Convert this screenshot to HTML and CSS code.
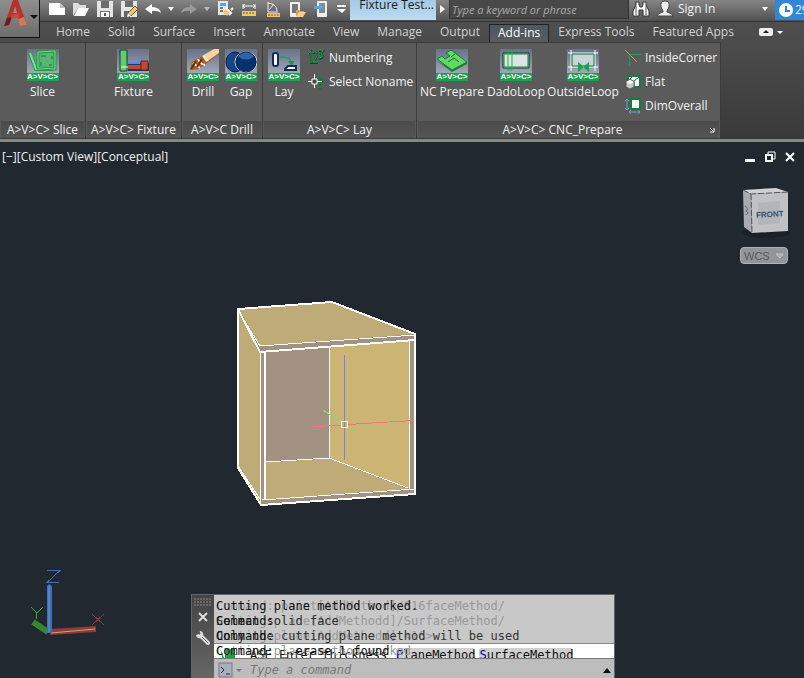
FILE: index.html
```html
<!DOCTYPE html>
<html lang="en">

<head>
    <meta charset="UTF-8">
    <meta name="viewport" content="width=device-width, initial-scale=1.0">
    <title>Fixture Test</title>
    <link rel="stylesheet" href="styles.css">
</head>

<body>
    <header class="top">
        <button class="app-button" aria-label="Application menu">
            <svg width="39" height="37" viewBox="0 0 39 37">
                <path d="M4 26L13 0H18L27 25L20 26L18 18H11L9 25Z" fill="#b8322c" />
                <path d="M13 13L15 6L17 13Z" fill="#8e8e8e" />
                <path d="M4 26L7 18L12 17L9 25Z" fill="#6d1d1a" />
                <path d="M18 19L24 17L27 25L20 26Z" fill="#cf7a5c" />
                <path d="M11 15L19 13V18H11Z" fill="#d1453a" />
                <path d="M30 15H38L34 19Z" fill="#111" />
            </svg>
        </button>

        <div class="title-bar">
            <div class="quick-access">
                <button aria-label="New"><svg width="18" height="18"><path d="M1 3H12L17 8V15H1Z" fill="#fff" /><path d="M12 3V8H17Z" fill="#bbb" /></svg></button>
                <button aria-label="Open"><svg width="18" height="18"><path d="M1 16V3H6L8 5H14V8H6Z" fill="#ddd" /><path d="M2 16L6 8H17L13 16Z" fill="#fff" /></svg></button>
                <button aria-label="Save"><svg width="18" height="18"><path d="M1 1H17V17H1Z" fill="#e4e4e4" /><path d="M5 1H13V8H5Z" fill="#6c6c6c" /><path d="M4 11H14V17H4Z" fill="#777" /><path d="M5 12H13V17H5Z" fill="#fff" /><path d="M8 13H10V16H8Z" fill="#555" /></svg></button>
                <button aria-label="Save as"><svg width="18" height="18"><path d="M1 1H17V17H1Z" fill="#e4e4e4" /><path d="M5 1H13V7H5Z" fill="#6c6c6c" /><path d="M4 11H10V17H4Z" fill="#666" /><path d="M15 6L18 9L11 16L8 13Z" fill="#f2c477" stroke="#7a5a27" /><path d="M8 13L11 16L7 17Z" fill="#fff" /></svg></button>
                <button aria-label="Undo"><svg width="18" height="18"><path d="M1 9L8 4V7Q16 7 17 13Q13 10 8 11V14Z" fill="#fff" /></svg></button>
                <button class="drop" aria-label="Undo list"><svg width="6" height="4"><path d="M0 0H6L3 4Z" fill="#fff" /></svg></button>
                <button aria-label="Redo"><svg width="18" height="18"><path d="M17 9L10 4V7Q2 7 1 13Q5 10 10 11V14Z" fill="#999" /></svg></button>
                <button class="drop" aria-label="Redo list"><svg width="6" height="4"><path d="M0 0H6L3 4Z" fill="#bbb" /></svg></button>
                <button aria-label="Match properties"><svg width="18" height="18"><path d="M2 1H12V15H2Z" fill="#e6e6e6" /><path d="M4 3H10V6H4Z" fill="#51a8e4" /><path d="M4 8H7M4 11H7" stroke="#777" stroke-width="2" /><path d="M7 12L10 9L14 13L11 16Z" fill="#f4c46c" /><path d="M10 8L15 13L13 15M15 10L17 8" stroke="#fff" stroke-width="2" fill="none" /></svg></button>
                <button aria-label="Measure"><svg width="18" height="18"><path d="M3 4V9M15 4V9M3 6H15M5 4L3 6L5 8M13 4L15 6L13 8" stroke="#fff" fill="none" /><path d="M2 11H16V16H2Z" fill="#f7c566" /><path d="M4 12V14M7 12V14M10 12V14M13 12V14" stroke="#6c552a" /></svg></button>
                <button aria-label="Angle"><svg width="18" height="18"><path d="M4 2V12H14M4 3Q13 4 13 11M5 10L10 4" stroke="#eee" fill="none" /><path d="M3 13H16V17H3Z" fill="#f7c566" /><path d="M5 14V16M8 14V16M11 14V16M14 14V16" stroke="#6c552a" /></svg></button>
                <button aria-label="Open from mobile"><svg width="18" height="18"><rect x="2" y="2" width="10" height="15" rx="1" fill="#eee" /><path d="M4 4H10V13H4Z" fill="#777" /><path d="M8 16V10H11L12 11H16V12Z" fill="#d99d4e" /><path d="M8 17L11 12H18L15 17Z" fill="#f8cf8b" /></svg></button>
                <button aria-label="Save to mobile"><svg width="18" height="18"><rect x="5" y="1" width="10" height="16" rx="1" fill="#eee" /><path d="M7 3H13V13H7Z" fill="#888" /><path d="M2 6H7V3L12 7L7 11V9H2Z" fill="#49a8ed" /></svg></button>
                <button class="drop more" aria-label="Customize"><svg width="9" height="8"><path d="M0 0H9V2H0ZM0 4H9L5 8Z" fill="#fff" /></svg></button>
            </div>
            <span class="doc-title">Fixture Test...</span>
            <button class="drop next" aria-label="Show search"><svg width="5" height="8"><path d="M0 0L5 4L0 8Z" fill="#fff" /></svg></button>
            <input class="search" type="text" placeholder="Type a keyword or phrase" aria-label="Search">
            <button class="find" aria-label="Find"><svg width="18" height="18"><path d="M4 2H7V5L8 7H10L11 5V2H14V5L17 11V16H11V10H7V16H1V11L4 5Z" fill="#fff" stroke="#333" /><path d="M4 6V15M14 6V15" stroke="#555" /></svg></button>
            <button class="sign-in">
                <svg width="18" height="18"><path d="M9 1Q14 1 13 7L11 11V12Q16 13 17 16H1Q2 13 7 12V11L5 7Q4 1 9 1Z" fill="#eee" stroke="#444" /></svg>
                <span>Sign In</span>
                <svg width="6" height="4"><path d="M0 0H6L3 4Z" fill="#fff" /></svg>
            </button>
            <div class="trial">
                <svg width="14" height="14"><circle cx="7" cy="7" r="7" fill="#fff" /><path d="M7 3V8H11" stroke="#3187d5" stroke-width="2" fill="none" /></svg>
                <span>29</span>
            </div>
        </div>

        <nav class="tabs">
            <a href="#">Home</a>
            <a href="#">Solid</a>
            <a href="#">Surface</a>
            <a href="#">Insert</a>
            <a href="#">Annotate</a>
            <a href="#">View</a>
            <a href="#">Manage</a>
            <a href="#">Output</a>
            <a href="#" class="active">Add-ins</a>
            <a href="#">Express Tools</a>
            <a href="#">Featured Apps</a>
            <button class="minimize" aria-label="Minimize ribbon"><svg width="24" height="8"><rect width="14" height="8" rx="2" fill="#eee" /><path d="M4 5H10L7 2Z" fill="#222" /><path d="M18 3H24L21 6Z" fill="#fff" /></svg></button>
        </nav>
    </header>

    <main class="ribbon">
        <section class="panel">
            <div class="tools">
                <button class="tool">
                    <span class="icon"><svg width="32" height="24"><path d="M3 4L9 20H26" fill="none" stroke="#2e9b4a" stroke-width="4" /><path d="M3 4L9 20H26" fill="none" stroke="#7fe28e" stroke-width="2" /><path d="M11 3L28 2V20L11 19Z" fill="#54b873" stroke="#2a8f44" stroke-width="3" /><path d="M11 3L28 2V20L11 19Z" fill="none" stroke="#6bea7d" /><path d="M14 7H19M25 7V10M25 16H22M14 17V13" stroke="#286b3e" fill="none" /></svg><b>A&gt;V&gt;C&gt;</b></span>
                    Slice
                </button>
            </div>
            <h2>A&gt;V&gt;C&gt; Slice</h2>
        </section>

        <section class="panel">
            <div class="tools">
                <button class="tool">
                    <span class="icon"><svg width="32" height="24"><path d="M11 14H32V22H11Z" fill="#1d376b" /><path d="M11 14H23" stroke="#4c90df" stroke-width="2" /><path d="M11 16H24V20H11Z" fill="#c14a2c" /><path d="M24 12H31V21H24Z" fill="#bd4b2e" stroke="#65231b" /><path d="M3 1H10V22H3Z" fill="#5fce6b" stroke="#123f27" /><path d="M4 18H11" stroke="#dfffff" /></svg><b>A&gt;V&gt;C&gt;</b></span>
                    Fixture
                </button>
            </div>
            <h2>A&gt;V&gt;C&gt; Fixture</h2>
        </section>

        <section class="panel">
            <div class="tools pair">
                <button class="tool">
                    <span class="icon"><svg width="32" height="24"><path d="M3 21L5 13L27 0H32V5L12 20Z" fill="#a95c2b" /><path d="M15 7L27 0H32V4L19 13Z" fill="#f4d3a0" /><path d="M6 14L13 19M11 10Q13 15 18 16M17 7L21 12" stroke="#fff0d1" stroke-width="2" fill="none" /><path d="M4 20L9 12M10 18L15 10" stroke="#6a3011" stroke-width="2" /></svg><b>A&gt;V&gt;C&gt;</b></span>
                    Drill
                </button>
                <button class="tool">
                    <span class="icon"><svg width="32" height="24"><ellipse cx="10" cy="13" rx="9" ry="10" fill="#15458b" stroke="#0c1d3d" /><ellipse cx="21" cy="13" rx="11" ry="10" fill="#06336f" stroke="#dce7f5" /><path d="M12 7Q20 0 30 7Q21 14 12 7" fill="#2b65aa" /><ellipse cx="21" cy="13" rx="10" ry="10" fill="none" stroke="#0c1d3d" /></svg><b>A&gt;V&gt;C&gt;</b></span>
                    Gap
                </button>
            </div>
            <h2>A&gt;V&gt;C Drill</h2>
        </section>

        <section class="panel">
            <div class="tools lay">
                <button class="tool">
                    <span class="icon"><svg width="32" height="24"><rect x="5" y="4" width="5" height="13" rx="2" fill="#f6faff" stroke="#102c5d" stroke-width="2" /><path d="M12 8H16L18 9H21L24 14" stroke="#12984c" fill="none" /><path d="M20 12H26L24 17Z" fill="#12984c" /><path d="M17 20L20 17H28V21H17Z" fill="#f6faff" stroke="#102c5d" stroke-width="2" /></svg><b>A&gt;V&gt;C&gt;</b></span>
                    Lay
                </button>
                <div class="list">
                    <button class="small"><svg width="18" height="18"><path d="M2 5L4 3V15M6 5Q8 2 10 4Q11 7 6 14H11M12 2H16L14 5Q17 6 15 9L12 10" fill="none" stroke="#0c4a2a" stroke-width="2" /><path d="M1 5L4 2V14M6 4Q8 1 10 4Q11 7 6 13H11M12 1H16L14 5Q17 6 15 8L12 9" fill="none" stroke="#16a852" /></svg>Numbering</button>
                    <button class="small"><svg width="18" height="18"><path d="M11 7Q16 5 15 9Q13 11 13 13M13 15V17" stroke="#127a3d" stroke-width="3" fill="none" /><path d="M7.500 1V15M1 8.500H15" stroke="#fff" /><path d="M5 6H10V11H5Z" fill="#444" stroke="#fff" /></svg>Select Noname</button>
                </div>
            </div>
            <h2>A&gt;V&gt;C&gt; Lay</h2>
        </section>

        <section class="panel">
            <div class="tools prepare">
                <button class="tool">
                    <span class="icon"><svg width="32" height="24"><path d="M1 12L16 23L31 15V12L16 20Z" fill="#2a7a3a" /><path d="M1 10L6 7L9 10L14 7L10 4L15 1L31 13L16 21Z" fill="#5fda63" stroke="#167c35" /><path d="M12 13L18 9L23 13M15 8L19 5" stroke="#16733a" fill="none" /></svg><b>A&gt;V&gt;C&gt;</b></span>
                    NC Prepare
                </button>
                <button class="tool">
                    <span class="icon"><svg width="32" height="24"><path d="M3 4H29V19H3Z" fill="#dfe3e4" stroke="#152e30" /><path d="M4 5H28V18H4Z" fill="none" stroke="#0b883a" /><path d="M8 2H12V21H8Z" fill="none" stroke="#12bd40" /></svg><b>A&gt;V&gt;C&gt;</b></span>
                    DadoLoop
                </button>
                <button class="tool">
                    <span class="icon"><svg width="32" height="24"><path d="M4 4H28V18H4Z" fill="#cbd5d7" /><path d="M4 1V22M28 1V22M1 4H31M1 18H31" stroke="#fff" /><path d="M5 5H27V17H5Z" fill="none" stroke="#08753a" /><path d="M11 13L17 18L11 23ZM22 13L16 18L22 23Z" fill="#14a84d" /></svg><b>A&gt;V&gt;C&gt;</b></span>
                    OutsideLoop
                </button>
                <div class="list">
                    <button class="small"><svg width="16" height="18"><path d="M0 1L12 13" stroke="#c4a254" /><path d="M16 5.500H6L4.500 7V17" stroke="#1ba250" fill="none" /></svg>InsideCorner</button>
                    <button class="small"><svg width="16" height="18"><path d="M3 3H15V14H3Z" fill="#fff" stroke="#0b833e" stroke-width="2" /><path d="M4 7L8 3M9 8L14 4M9 8V13M4 8H9" stroke="#0b833e" /><path d="M1 9L5 6L9 9V14L5 16L1 14Z" fill="#ccc" stroke="#555" /><path d="M1 9L5 11L9 9L5 7Z" fill="#fff" /></svg>Flat</button>
                    <button class="small"><svg width="16" height="18"><path d="M6 2H15V12H6Z" fill="#fff" stroke="#0b833e" stroke-width="2" /><path d="M2 2V13M0 4L2 2L4 4M0 11L2 13L4 11M4 15H15M6 13L4 15L6 17M13 13L15 15L13 17" stroke="#68a0d6" fill="none" /></svg>DimOverall</button>
                </div>
            </div>
            <h2 class="with-launcher">A&gt;V&gt;C&gt; CNC_Prepare <svg class="launcher" width="6" height="6"><path d="M1 1L5 5M5 1V5H1" stroke="#fff" fill="none" /></svg></h2>
        </section>
    </main>

    <div class="viewport">
        <div class="view-bar">
            <div class="view-label">[−][Custom View][Conceptual]</div>
            <div class="window-buttons">
                <button aria-label="Minimize"><svg width="12" height="12"><path d="M1 8H11V11H1Z" fill="#fff" /></svg></button>
                <button aria-label="Restore"><svg width="12" height="12"><path d="M4 3V1H11V8H9" stroke="#fff" fill="none" /><path d="M2 4H8V10H2Z" stroke="#fff" stroke-width="2" fill="none" /></svg></button>
                <button aria-label="Close"><svg width="12" height="12"><path d="M2 2L10 10M10 2L2 10" stroke="#fff" stroke-width="2" /></svg></button>
            </div>
        </div>

        <!-- Cabinet model with the crosshair -->
        <svg class="model" width="190" height="214" viewBox="230 298 190 214">
            <path d="M238 309L332 302L415 334V494L261 506L238 468Z" fill="#a39282" />
            <path d="M238 309L332 302L415 334L260 346Z" fill="#bfab78" />
            <path d="M238 311L260 350V505L238 467Z" fill="#bfab78" />
            <path d="M329 346L410 341V489L329 458Z" fill="#ccb574" />
            <path d="M265 462L329 458L408 489L265 500Z" fill="#bfab78" />
            <g fill="none" stroke="#fff" shape-rendering="crispEdges">
                <path d="M265 462L329 458L408 488M329.5 346V458M260 346L415 335M262 500L415 489" />
                <path d="M239 312L260 346M238 466L260 499" />
                <path d="M238 309L332 302L415 334V494L261 505L238 468ZM238 309L260 352L415 340M265 352V500" stroke-width="2" />
                <path d="M260.5 351V505M409.5 341V489" />
            </g>
            <g fill="none" shape-rendering="crispEdges">
                <path d="M344.5 355V460" stroke="#7b7bf2" />
                <path d="M311 426.5L341 425.500M348 424.500L413 420.500" stroke="#f27878" />
                <path d="M323 410L341 422M348 427L356 432" stroke="#78e078" />
                <path d="M341.500 421.500H347.500V427.500H341.500Z" stroke="#fffbd0" />
            </g>
        </svg>

        <!-- View cube -->
        <svg class="cube" width="60" height="56" viewBox="736 184 60 56">
            <ellipse cx="766" cy="233" rx="24" ry="5" fill="#1c2127" />
            <path d="M743 190L776 188L788 192L751 194Z" fill="#d0d1d3" />
            <path d="M743 190L751 194L752 233L744 227Z" fill="#a9abae" />
            <path d="M751 194L788 192V231L752 233Z" fill="#bfc1c4" />
            <path d="M743 190L751 194L788 192M751 194L752 233" fill="none" stroke="#556" stroke-dasharray="6 2" />
            <path d="M758 203L780 201V223L758 225Z" fill="#b2b6ba" />
            <path d="M745 206Q749 208 746 211Q750 213 746 215" stroke="#50647a" fill="none" />
            <text x="756" y="217" transform="rotate(-3 770 214)">FRONT</text>
        </svg>
        <div class="wcs">
            <select aria-label="Coordinate system">
                <option>WCS</option>
            </select>
            <svg width="9" height="6"><path d="M1 1H8L5 5Z" fill="#a6a8ab" stroke="#c5c6c8" /></svg>
        </div>

        <!-- UCS axes -->
        <svg class="axes" width="84" height="74" viewBox="24 566 84 74">
            <path d="M33 622L48 632" stroke="#34872f" stroke-width="6" />
            <path d="M50 632L96 629" stroke="#8c3c3a" stroke-width="6" />
            <path d="M51 633L95 629" stroke="#d1a071" />
            <path d="M47 586L49 584L52 586V633H47Z" fill="#416fb5" />
            <path d="M49 586V632" stroke="#6a96d4" />
            <g fill="none" shape-rendering="crispEdges">
                <path d="M47 570.500H60L47 582.500H59" stroke="#416fb5" />
                <path d="M31 607L37 613L43 607M36.500 613V619" stroke="#22b422" />
                <path d="M92 614L104 625M104 614L92 625" stroke="#853f3f" />
            </g>
        </svg>

        <div class="command">
            <div class="handle">
                <svg width="18" height="8"><path d="M0 1H18M0 4H18M0 7H18" stroke="#888" stroke-dasharray="2 1" /></svg>
                <button aria-label="Close command line"><svg width="12" height="12"><path d="M2 2L10 10M10 2L2 10" stroke="#ddd" stroke-width="2" /></svg></button>
                <button aria-label="Customize command line"><svg width="16" height="16"><path d="M6 6L13 13" stroke="#ddd" stroke-width="4" stroke-linecap="round" /><path d="M6 6L13 13" stroke="#666" stroke-width="1" /><path d="M5 1L4 4L1 5Q2 9 6 8Q9 6 8 3Q7 1 5 1Z" fill="#ddd" /><path d="M2 1L5 4" stroke="#555" stroke-width="2" /></svg></button>
            </div>
            <div class="console">
                <div class="history">
                    <p><span class="ghost">Command: point[AddMethod]/S16faceMethod/</span><span>Cutting plane method worked.</span></p>
                    <p><span class="ghost">Cutting:plane[AddMethodd]/SurfaceMethod/</span><span class="faded">Select solid face</span><span>Command:</span></p>
                    <p><span class="ghost">Cutting:plane[AddMethodd] &lt;16&gt;</span><span class="faded">Only the cutting plane method will be used</span><span>Command:</span></p>
                </div>
                <div class="prompt">
                    <div class="options">
                        <svg width="16" height="12"><path d="M1 0L4 12H16V1H6V12" fill="#0ca944" /></svg>
                        <span>ASE Enter thickness [</span>
                        <button><em>P</em>laneMethod</button>
                        <button><em>S</em>urfaceMethod</button>
                    </div>
                    <p><span class="ghost">Cutting plane method worked</span><span>Command: _.erase 1 found</span></p>
                </div>
                <div class="entry">
                    <svg width="24" height="16"><rect x="1" y="1" width="13" height="14" fill="#a9b0bb" stroke="#737b88" /><path d="M3 5L6 8L3 11M8 12H12" stroke="#222c3b" fill="none" /><path d="M18 7H24L21 10Z" fill="#777" /></svg>
                    <input type="text" placeholder="Type a command" aria-label="Command">
                    <svg width="8" height="5"><path d="M0 5L4 0L8 5Z" fill="#111" /></svg>
                </div>
            </div>
        </div>
    </div>
</body>

</html>
```
FILE: styles.css
```css
* {
    margin: 0;
    padding: 0;
    box-sizing: border-box;
}

body {
    display: flex;
    flex-direction: column;
    height: 100vh;
    overflow: hidden;
    background-color: #212830;
    color: #f2f2f2;
    font-family: "Open Sans", "Noto Sans", sans-serif;
    font-size: 12px;
    line-height: 16px;
}

button, input, select {
    border: none;
    background: none;
    color: inherit;
    font: inherit;
}

svg {
    display: block;
    flex: none;
}

a {
    color: inherit;
    text-decoration: none;
}

/* Title bar and tabs */
.top {
    display: grid;
    grid-template-columns: 45px 1fr;
    grid-template-rows: 22px 20px;
    background: linear-gradient(#535353, #4b4b4b);
}

.app-button {
    grid-row: 1 / 3;
    width: 40px;
    height: 38px;
    border-right: 1px solid #111;
    border-bottom: 1px solid #111;
    background: linear-gradient(#8e8e8e, #6d6d6d);
    z-index: 1;
}

.title-bar {
    display: flex;
    min-width: 0;
    height: 22px;
    margin-left: -5px;
    padding-left: 5px;
    border-bottom: 1px solid #333;
    background: linear-gradient(#858585, #515151);
}

.quick-access {
    display: flex;
}

.title-bar button {
    display: flex;
    align-items: center;
    justify-content: center;
    width: 24px;
    height: 18px;
}

.title-bar .drop {
    width: 12px;
}

.title-bar .more {
    width: 17px;
}

.title-bar .next {
    width: 13px;
}

.doc-title {
    width: 86px;
    height: 20px;
    padding-right: 2px;
    background: linear-gradient(#a5c8e4, #bcdcf2);
    color: #1b1b1b;
    line-height: 10px;
    text-align: right;
    white-space: nowrap;
}

.search {
    width: 180px;
    height: 19px;
    padding-left: 2px;
    border: 1px solid #333;
    border-top: none;
    background-color: #484848;
    font-size: 11px;
    font-style: italic;
}

.search::placeholder {
    color: #a8a8a8;
}

.title-bar .sign-in {
    flex: 1;
    justify-content: flex-start;
    gap: 4px;
    padding: 0 7px 0 3px;
}

.sign-in span {
    flex: 1;
    text-align: left;
}

.trial {
    display: flex;
    align-items: center;
    gap: 2px;
    width: 29px;
    height: 20px;
    padding-left: 4px;
    overflow: hidden;
    background-color: #3187d5;
}

.tabs {
    display: flex;
    align-items: stretch;
    min-width: 0;
    padding-left: 2px;
    color: #d2d2d2;
    white-space: nowrap;
}

.tabs a {
    padding: 2px 9px 0;
}

.tabs .active {
    border: 1px solid #222;
    border-bottom: none;
    margin-top: 2px;
    padding: 0 8px;
    background: linear-gradient(#4d5763, #5b5b5b);
    color: #fff;
}

.minimize {
    margin-left: 16px;
}

/* Ribbon */
.ribbon {
    display: grid;
    grid-template-columns: 86px 96px 81px 154px 304px;
    height: 100px;
    padding-bottom: 1px;
    border-bottom: 3px solid #858885;
    background: linear-gradient(#4c4c4c, #393939);
}

.panel {
    display: flex;
    flex-direction: column;
    justify-content: space-between;
    border: 1px solid #3b3b3b;
    border-width: 1px 1px 0 0;
    background-color: #5b5b5b;
}

.panel h2 {
    position: relative;
    height: 17px;
    margin: 0 1px;
    background: linear-gradient(#4b4b4b, #555);
    font-size: 12px;
    font-weight: normal;
    line-height: 17px;
    text-align: center;
    white-space: nowrap;
}

.panel .with-launcher {
    padding-right: 12px;
}

.launcher {
    position: absolute;
    right: 4px;
    bottom: 5px;
}

.tools {
    display: grid;
    justify-content: center;
    padding-top: 6px;
}

.pair {
    grid-template-columns: 38px 38px;
}

.lay {
    grid-template-columns: 42px 1fr;
}

.prepare {
    grid-template-columns: 70px 58px 76px 1fr;
}

.tool {
    display: flex;
    flex-direction: column;
    align-items: center;
    align-self: start;
    gap: 3px;
    white-space: nowrap;
}

.icon {
    width: 32px;
    height: 32px;
    overflow: hidden;
    background: linear-gradient(#65728a, #b4b9c1);
}

.icon b {
    display: block;
    height: 8px;
    background-color: #16a34c;
    color: #fff;
    font-family: "Liberation Sans", Arial, sans-serif;
    font-size: 8px;
    line-height: 8px;
}

.list {
    display: flex;
    flex-direction: column;
    gap: 6px;
    padding-left: 2px;
}

.prepare .list {
    padding-left: 4px;
}

.small {
    display: flex;
    align-items: center;
    gap: 4px;
    height: 18px;
    white-space: nowrap;
}

/* Drawing area */
.viewport {
    position: relative;
    flex: 1;
}

.view-bar {
    display: flex;
    justify-content: space-between;
    padding: 7px 8px 0 2px;
}

.window-buttons {
    display: flex;
    align-items: center;
    gap: 8px;
}

.model {
    position: absolute;
    left: 230px;
    top: 156px;
}

.cube {
    position: absolute;
    right: 8px;
    top: 42px;
}

.cube text {
    fill: #35506e;
    font-family: "Liberation Sans", Arial, sans-serif;
    font-size: 8px;
    font-weight: bold;
}

.wcs {
    position: absolute;
    right: 16px;
    top: 105px;
    display: flex;
    align-items: center;
    width: 48px;
    height: 17px;
    border: 1px solid #b0b2b5;
    border-radius: 4px;
    background-color: #92959a;
}

.wcs select {
    width: 34px;
    padding-left: 3px;
    appearance: none;
    color: #55585d;
    font-family: "Liberation Sans", Arial, sans-serif;
    font-size: 11px;
}

.axes {
    position: absolute;
    left: 24px;
    bottom: 38px;
}

/* Command line */
.command {
    position: absolute;
    left: 191px;
    bottom: 0;
    display: flex;
    width: 424px;
    height: 84px;
    border: 1px solid #666;
    border-bottom: none;
    color: #111;
    font-family: "DejaVu Sans Mono", monospace;
    font-size: 12px;
}

.handle {
    display: flex;
    flex-direction: column;
    align-items: center;
    width: 22px;
    padding-top: 3px;
    background: linear-gradient(#444, #666);
}

.handle button {
    display: flex;
    align-items: center;
    height: 21px;
}

.console {
    display: flex;
    flex: 1;
    flex-direction: column;
    min-width: 0;
    overflow: hidden;
    white-space: nowrap;
}

.history {
    height: 49px;
    padding: 4px 0 0 2px;
    border-bottom: 1px solid #888;
    background-color: #c8c8c8;
    line-height: 15px;
}

/* Lines drawn over each other share one grid cell */
.history p, .prompt, .prompt p {
    display: grid;
}

.prompt p {
    align-self: start;
    padding-left: 2px;
    line-height: 15px;
}

p span, .prompt > * {
    grid-area: 1 / 1;
}

.ghost {
    color: #999;
}

.faded {
    color: #333;
}

.prompt {
    height: 17px;
    overflow: hidden;
    background-color: #fff;
}

.options {
    display: flex;
    align-items: flex-start;
    padding: 4px 0 0 5px;
    line-height: 15px;
}

.options span {
    width: 161px;
    padding-left: 15px;
}

.options button {
    margin-right: 4px;
    border-radius: 2px;
    background-color: #d0d0d0;
}

.options em {
    color: #00a;
    font-style: normal;
}

.entry {
    display: flex;
    flex: 1;
    align-items: center;
    gap: 8px;
    padding: 3px 3px 0 4px;
    border-top: 1px solid #777;
    background-color: #bdbdbd;
}

.entry input {
    flex: 1;
    font-style: italic;
}

.entry input::placeholder {
    color: #777;
}
```
